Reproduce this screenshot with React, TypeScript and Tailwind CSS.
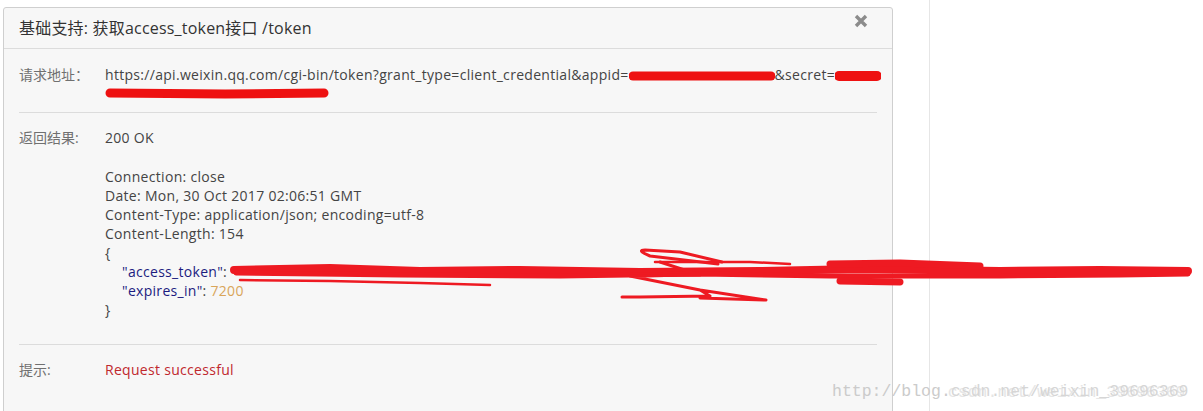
import React from "react";

const font = { fontFamily: '"Open Sans", "Noto Sans CJK SC", sans-serif' };

const Scribble = ({ w, h, d, sw }: { w: number; h: number; d: string; sw: number }) => (
  <svg width={w} height={h} className="inline-block align-middle">
    <path d={d} stroke="#ee1111" strokeWidth={sw} strokeLinecap="round" fill="none" />
  </svg>
);

export default function App() {
  return (
    <div className="relative w-[1203px] h-[411px] overflow-hidden bg-white flex" style={font}>
      <div className="ml-[3px] mt-[7px] w-[890px] h-[430px] border border-[#cfcfcf] rounded-t-[3px] bg-[#f7f7f7] shrink-0">
        {/* header */}
        <div className="h-[41px] border-b border-[#dcdcdc] px-[15px] flex items-center justify-between">
          <span className="text-[16px] tracking-[0.2px] text-[#333]">基础支持: 获取access_token接口 /token</span>
          <svg width="14" height="14" viewBox="0 0 14 14" className="mr-[9px] -mt-[14px]">
            <path d="M2 2 L12 12 M12 2 L2 12" stroke="#8c8c8c" strokeWidth="3.4" />
          </svg>
        </div>

        <div className="px-[15px] text-[14px] leading-[19px] tracking-[0.3px] text-[#444]">
          <div className="flex pt-[16px] pb-[9px] border-b border-[#dcdcdc]">
            <div className="w-[86px] shrink-0 text-[#707070] tracking-normal">请求地址：</div>
            <div>
              <div className="whitespace-nowrap">
                https://api.weixin.qq.com/cgi-bin/token?grant_type=client_credential&amp;appid=
                <Scribble w={146} h={12} sw={9} d="M4 6 L142 6" />
                &amp;secret=
                <Scribble w={46} h={12} sw={10} d="M4 6 L42 6" />
              </div>
              <div className="h-[19px] flex items-center">
                <Scribble w={224} h={13} sw={9} d="M5 6 L120 7 L219 6" />
              </div>
            </div>
          </div>

          <div className="flex pt-[15px] pb-[25px] border-b border-[#dcdcdc]">
            <div className="w-[86px] shrink-0 text-[#707070] tracking-normal">返回结果:</div>
            <div>
              <div>200 OK</div>
              <div className="h-[20px]" />
              <div>Connection: close</div>
              <div>Date: Mon, 30 Oct 2017 02:06:51 GMT</div>
              <div>Content-Type: application/json; encoding=utf-8</div>
              <div>Content-Length: 154</div>
              <div>{"{"}</div>
              <div className="pl-[17px]">
                <span className="text-[#1c1c80]">"access_token"</span>: <span className="text-[#d9a55a]">"</span>
              </div>
              <div className="pl-[17px]">
                <span className="text-[#1c1c80]">"expires_in"</span>: <span className="text-[#d9a55a]">7200</span>
              </div>
              <div>{"}"}</div>
            </div>
          </div>

          <div className="flex pt-[15px]">
            <div className="w-[86px] shrink-0 text-[#707070] tracking-normal">提示:</div>
            <div className="text-[#c0282e]">Request successful</div>
          </div>
        </div>
      </div>

      <div className="ml-[36px] h-full border-l border-[#e6e6e6]" />

      {/* red scribble over the token */}
      <svg className="absolute left-0 top-0 pointer-events-none" width="1203" height="411">
        <g stroke="#ee1a22" fill="none" strokeLinecap="round" strokeLinejoin="round">
          <path d="M234 270 L330 268 L420 271 L520 270 L640 272 L760 271 L860 269 L1000 271 L1100 270 L1188 271" strokeWidth="8" />
          <path d="M236 273 L400 275 L560 276 L700 274 L830 276 L1000 276 L1120 275 L1188 274" strokeWidth="5" />
          <path d="M830 264 L900 263 L980 266 M840 281 L900 282 M1060 272 L1170 272" strokeWidth="7" />
          <path d="M240 280 L330 281 L420 283 L490 285" strokeWidth="2.5" />
          <path d="M655 262 L750 262 L790 264" strokeWidth="2.5" />
          <path d="M718 264 L650 256 Q636 250 645 250 L680 252 L722 262 M660 262 L700 275 L630 276 L700 290 L710 296 L640 297 L622 297 M700 290 L766 300 L700 298" strokeWidth="3" />
        </g>
      </svg>

      {/* watermark */}
      <div
        className="absolute left-[832px] top-[382px] text-[16.5px] leading-[20px] whitespace-nowrap text-[#cbcbcb]"
        style={{ fontFamily: '"Liberation Mono", monospace' }}
      >
        http://blog.
        <span className="text-[#d6d6d6]" style={{ textShadow: "-3px 1px 0 #e6e6e6" }}>
          csdn.net/weixin_39696369
        </span>
      </div>
    </div>
  );
}
